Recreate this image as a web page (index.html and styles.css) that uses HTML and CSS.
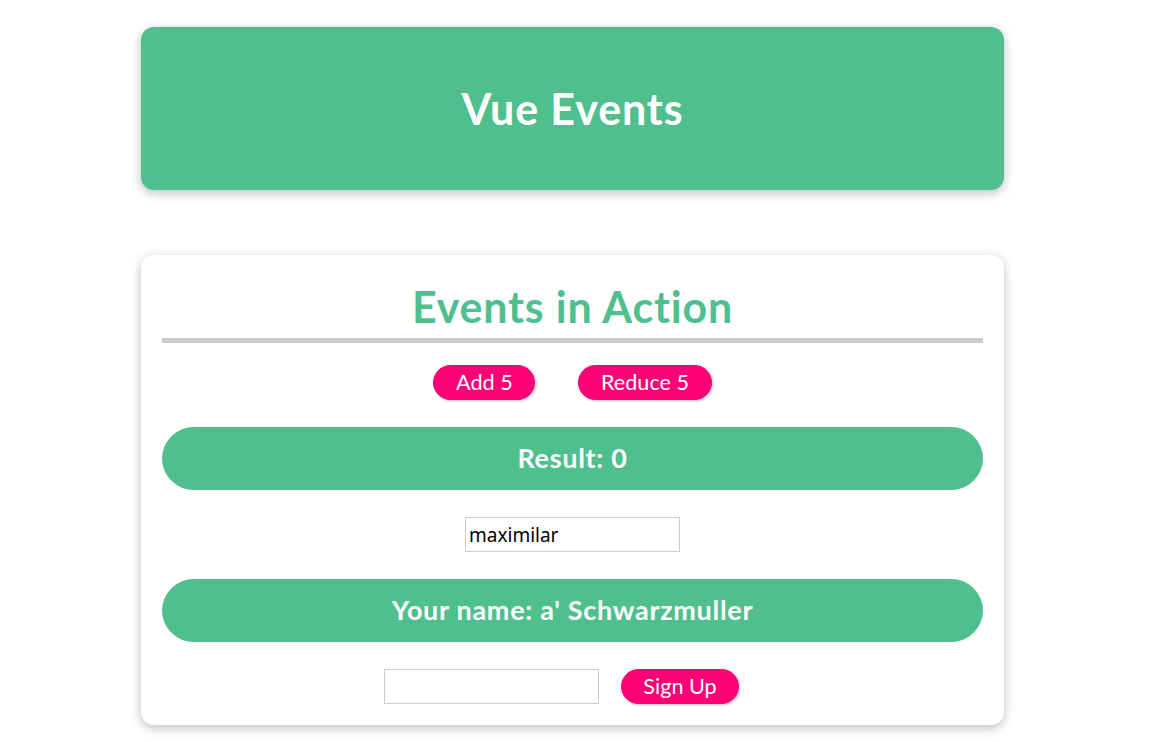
FILE: index.html
```html
<!DOCTYPE html>
<html lang="en">
<head>
<meta charset="utf-8">
<title>Vue Events</title>
<link rel="stylesheet" href="styles.css">
</head>
<body>
<div class="page">
  <header class="hero">
    <h1 class="hero-title">Vue Events</h1>
  </header>
  <section class="events">
    <h2 class="events-title">Events in Action</h2>
    <div class="actions">
      <button class="btn" type="button">Add 5</button>
      <button class="btn" type="button">Reduce 5</button>
    </div>
    <p class="pill">Result: 0</p>
    <input class="field field-center" type="text" value="maximilar">
    <p class="pill">Your name: a' Schwarzmuller</p>
    <form class="signup">
      <input class="field" type="text"><button class="btn" type="submit">Sign Up</button>
    </form>
  </section>
</div>
</body>
</html>
```
FILE: styles.css
```css
* { box-sizing: border-box; }
html { font-family: "Lato", "Noto Sans", sans-serif; }
body { margin: 0; background: #fff; }

.page {
  padding-top: 27px;
  padding-bottom: 20px;
}

.hero {
  width: 863px;
  margin: 0 0 65px 141px;
  height: 163px;
  border-radius: 13px;
  background-color: #4fc08d;
  color: #fff;
  box-shadow: 0 3px 11px rgba(0, 0, 0, 0.26);
  display: flex;
  align-items: center;
  justify-content: center;
}

.hero-title {
  margin: 0;
  font-size: 43px;
  font-weight: 700;
  line-height: 62px;
  letter-spacing: 0.9px;
}

.events {
  width: 863px;
  margin-left: 141px;
  padding: 21px;
  border-radius: 13px;
  box-shadow: 0 3px 11px rgba(0, 0, 0, 0.26);
  text-align: center;
}

.events-title {
  margin: 0 0 22px 0;
  font-size: 43px;
  font-weight: 700;
  line-height: 62px;
  letter-spacing: 0.8px;
  color: #4fc08d;
  border-bottom: 5px solid #ccc;
}

.actions {
  display: flex;
  justify-content: center;
  height: 35px;
}

.btn {
  font-family: inherit;
  font-size: 21.6px;
  height: 35px;
  line-height: 31px;
  padding: 0 21.6px;
  margin: 0 21.6px;
  border: 1px solid #ff0077;
  background-color: #ff0077;
  color: #fff;
  border-radius: 27px;
  box-shadow: 1px 1px 3px rgba(0, 0, 0, 0.26);
  cursor: pointer;
}

.pill {
  margin: 27px 0;
  height: 63px;
  font-size: 27px;
  font-weight: 700;
  line-height: 59px;
  letter-spacing: 0.7px;
  color: #fff;
  background-color: #4fc08d;
  border: 1px solid #4fc08d;
  border-radius: 34px;
}

.field {
  display: block;
  width: 215px;
  height: 35px;
  margin: 0;
  padding: 0 3px;
  font-family: "Noto Sans", "Open Sans", sans-serif;
  font-size: 19px;
  color: #000;
  border: 1px solid #ccc;
  background: #fff;
}

.field-center { margin: 0 auto; }

.signup {
  display: flex;
  justify-content: center;
  align-items: center;
  margin: 0;
}
```
